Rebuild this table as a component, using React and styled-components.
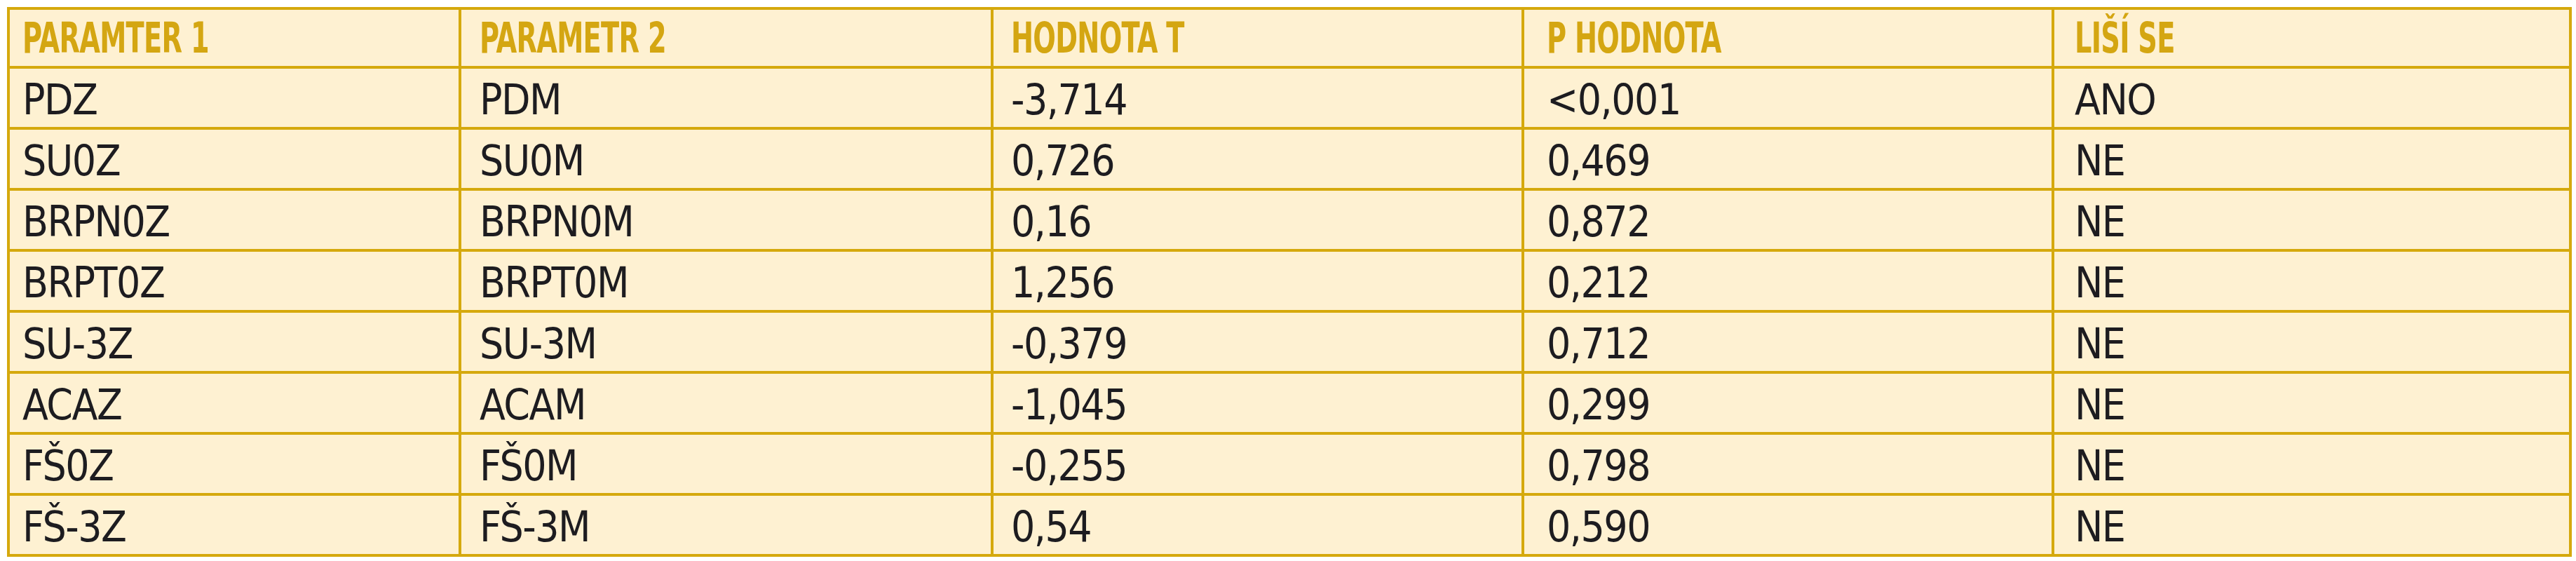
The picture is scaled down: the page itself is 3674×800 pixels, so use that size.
import React from "react";
import styled, { createGlobalStyle } from "styled-components";

const GlobalStyle = createGlobalStyle`
  html, body {
    margin: 0;
    padding: 0;
    background: #ffffff;
  }
`;

const Page = styled.div`
  padding: 10px 0 0 10px;
`;

const Table = styled.div`
  display: grid;
  grid-template-columns: 640px 755px 753px 752px 734px;
  grid-template-rows: 80px repeat(8, 1fr);
  gap: 4px;
  padding: 4px;
  width: 3650px;
  height: 776px;
  background: #d5a90d;
  font-family: "Liberation Sans Narrow", "DejaVu Sans Condensed", "Liberation Sans", sans-serif;
`;

const HeadCell = styled.div`
  display: flex;
  align-items: center;
  padding-left: ${(p) => p.$pad}px;
  background: #fef1d2;
  color: #d4a612;
  white-space: nowrap;
  overflow: hidden;
`;

// condensed look of the printed header face
const HeadText = styled.span`
  display: inline-block;
  font-size: 60px;
  font-weight: 700;
  letter-spacing: -1px;
  transform: scaleX(0.71);
  transform-origin: left center;
`;

const Cell = styled.div`
  display: flex;
  align-items: center;
  padding-left: ${(p) => p.$pad}px;
  padding-top: 4px;
  background: #fef1d2;
  color: #1d1c20;
  font-size: 60px;
  font-weight: 400;
  letter-spacing: -1.5px;
  white-space: nowrap;
`;

const pads = [18, 26, 25, 32, 29];

const head = ["PARAMTER 1", "PARAMETR 2", "HODNOTA T", "P HODNOTA", "LIŠÍ SE"];

const rows = [
  ["PDZ", "PDM", "-3,714", "<0,001", "ANO"],
  ["SU0Z", "SU0M", "0,726", "0,469", "NE"],
  ["BRPN0Z", "BRPN0M", "0,16", "0,872", "NE"],
  ["BRPT0Z", "BRPT0M", "1,256", "0,212", "NE"],
  ["SU-3Z", "SU-3M", "-0,379", "0,712", "NE"],
  ["ACAZ", "ACAM", "-1,045", "0,299", "NE"],
  ["FŠ0Z", "FŠ0M", "-0,255", "0,798", "NE"],
  ["FŠ-3Z", "FŠ-3M", "0,54", "0,590", "NE"],
];

export default function App() {
  return (
    <Page>
      <GlobalStyle />
      <Table>
        {head.map((h, i) => (
          <HeadCell key={h} $pad={pads[i]}>
            <HeadText>{h}</HeadText>
          </HeadCell>
        ))}
        {rows.map((r, ri) =>
          r.map((v, ci) => (
            <Cell key={ri + "-" + ci} $pad={pads[ci]}>
              {v}
            </Cell>
          ))
        )}
      </Table>
    </Page>
  );
}
